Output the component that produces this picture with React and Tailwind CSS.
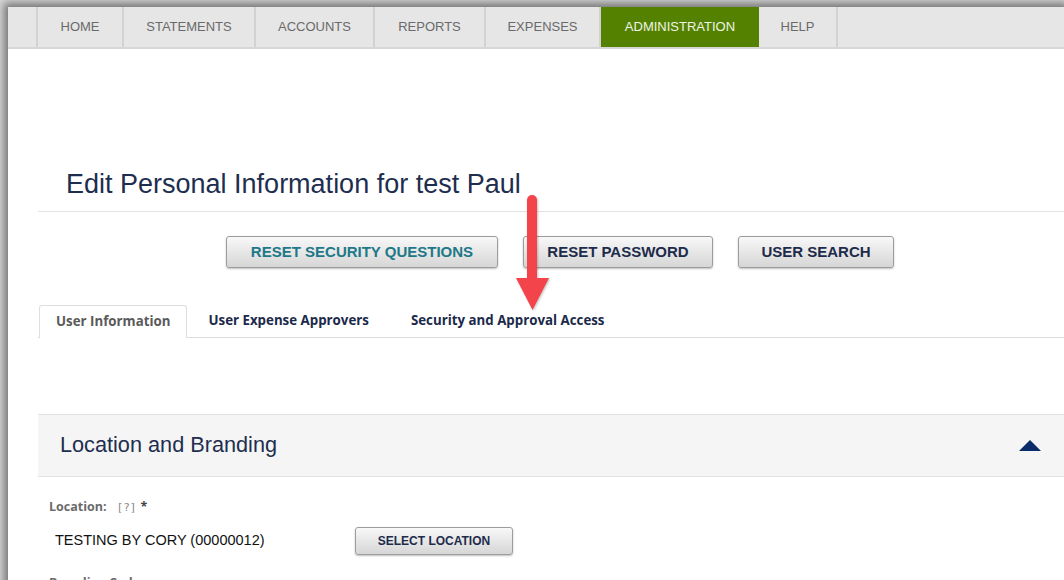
import React from "react";

const navItems = [
  { label: "HOME", w: "w-[86px]" },
  { label: "STATEMENTS", w: "w-[132px]" },
  { label: "ACCOUNTS", w: "w-[119px]" },
  { label: "REPORTS", w: "w-[111px]" },
  { label: "EXPENSES", w: "w-[115px]" },
  { label: "ADMINISTRATION", w: "w-[158px]", active: true },
  { label: "HELP", w: "w-[79px]" },
];

function NavBar() {
  return (
    <div className="flex h-[42px] bg-[#e6e6e6] border-b-2 border-[#d6d6d6] font-['Liberation_Sans',Arial,sans-serif] text-[13px]">
      <div className="w-[30px] border-r-2 border-[#d2d2d2]" />
      {navItems.map((item) => (
        <div
          key={item.label}
          className={
            item.active
              ? `${item.w} flex items-center justify-center bg-[#548200] text-[#eef4e6]`
              : `${item.w} flex items-center justify-center border-r-2 border-[#d2d2d2] text-[#6a6a6a]`
          }
        >
          {item.label}
        </div>
      ))}
    </div>
  );
}

function GrayButton({ children, className = "" }) {
  return (
    <button
      className={`bg-gradient-to-b from-[#f8f8f8] to-[#d6d6d6] border border-[#9d9d9d] rounded-[3px] shadow-[0_1px_2px_rgba(0,0,0,0.25)] font-bold font-['Liberation_Sans',Arial,sans-serif] ${className}`}
    >
      {children}
    </button>
  );
}

function RedArrow() {
  return (
    <svg
      className="absolute left-[512px] top-[190px] drop-shadow-[1px_1px_1px_rgba(0,0,0,0.25)]"
      width="42"
      height="124"
      viewBox="0 0 42 124"
    >
      <rect x="15" y="5" width="10" height="88" rx="5" fill="#f2444a" />
      <polygon points="4,88 37,88 20.5,120" fill="#f2444a" />
    </svg>
  );
}

export default function App() {
  return (
    <div className="relative w-[1064px] h-[580px] overflow-hidden bg-[#d6d6d6]">
      <div className="ml-[8px] mt-[7px] h-[600px] bg-white shadow-[0_0_8px_4px_rgba(0,0,0,0.45)]">
        <NavBar />

        <div className="pl-[30px]">
          {/* Page heading */}
          <h1 className="mt-[119px] pl-[28px] text-[27px] leading-[32px] text-[#1e2e4f] font-['Liberation_Sans',Arial,sans-serif]">
            Edit Personal Information for test Paul
          </h1>
          <div className="mt-[11px] h-px bg-[#e2e2e2]" />

          {/* Action buttons */}
          <div className="mt-[24px] pl-[188px] flex gap-[25px]">
            <GrayButton className="h-[32px] w-[272px] text-[15px] text-[#1d7888]">
              RESET SECURITY QUESTIONS
            </GrayButton>
            <GrayButton className="h-[32px] w-[190px] text-[15px] text-[#1d2b4b]">
              RESET PASSWORD
            </GrayButton>
            <GrayButton className="h-[32px] w-[156px] text-[15px] text-[#1d2b4b]">
              USER SEARCH
            </GrayButton>
          </div>

          {/* Tabs */}
          <div className="mt-[37px] flex border-b border-[#dedede] font-['Open_Sans',sans-serif] font-bold text-[13.3px]">
            <div className="ml-px -mb-px h-[33px] px-[16px] flex items-center bg-white border border-b-0 border-[#dedede] rounded-t-[3px] text-[#5a5a5a]">
              User Information
            </div>
            <div className="h-[32px] px-[21px] flex items-center text-[#1b2a4a]">
              User Expense Approvers
            </div>
            <div className="h-[32px] px-[21px] flex items-center text-[#1b2a4a]">
              Security and Approval Access
            </div>
          </div>

          {/* Collapsible section header */}
          <div className="mt-[76px] h-[63px] flex items-center justify-between bg-[#f5f5f5] border-y border-[#e2e2e2] pl-[22px] pr-[23px]">
            <span className="text-[21.7px] text-[#1e2e4f] font-['Liberation_Sans',Arial,sans-serif]">
              Location and Branding
            </span>
            <svg width="22" height="11" viewBox="0 0 22 11">
              <polygon points="11,0 22,11 0,11" fill="#0b2b6b" />
            </svg>
          </div>

          {/* Location field */}
          <div className="mt-[21px] pl-[11px] flex items-baseline gap-[4px] font-['Open_Sans',sans-serif] text-[12.5px]">
            <span className="font-bold text-[#6b6b6b]">Location:</span>
            <span className="ml-[6px] text-[11px] text-[#888] font-['DejaVu_Sans_Mono',monospace]">[?]</span>
            <span className="font-bold text-[#444]">*</span>
          </div>
          <div className="mt-[10px] pl-[17px] flex items-center">
            <span className="w-[300px] text-[14.5px] text-[#111] font-['Liberation_Sans',Arial,sans-serif]">
              TESTING BY CORY (00000012)
            </span>
            <GrayButton className="h-[28px] w-[158px] text-[12px] text-[#1d2b4b]">
              SELECT LOCATION
            </GrayButton>
          </div>

          <div className="mt-[19px] pl-[11px] font-['Open_Sans',sans-serif] font-bold text-[12.5px] text-[#6b6b6b]">
            Branding Code:
          </div>
        </div>
      </div>

      <RedArrow />
    </div>
  );
}
